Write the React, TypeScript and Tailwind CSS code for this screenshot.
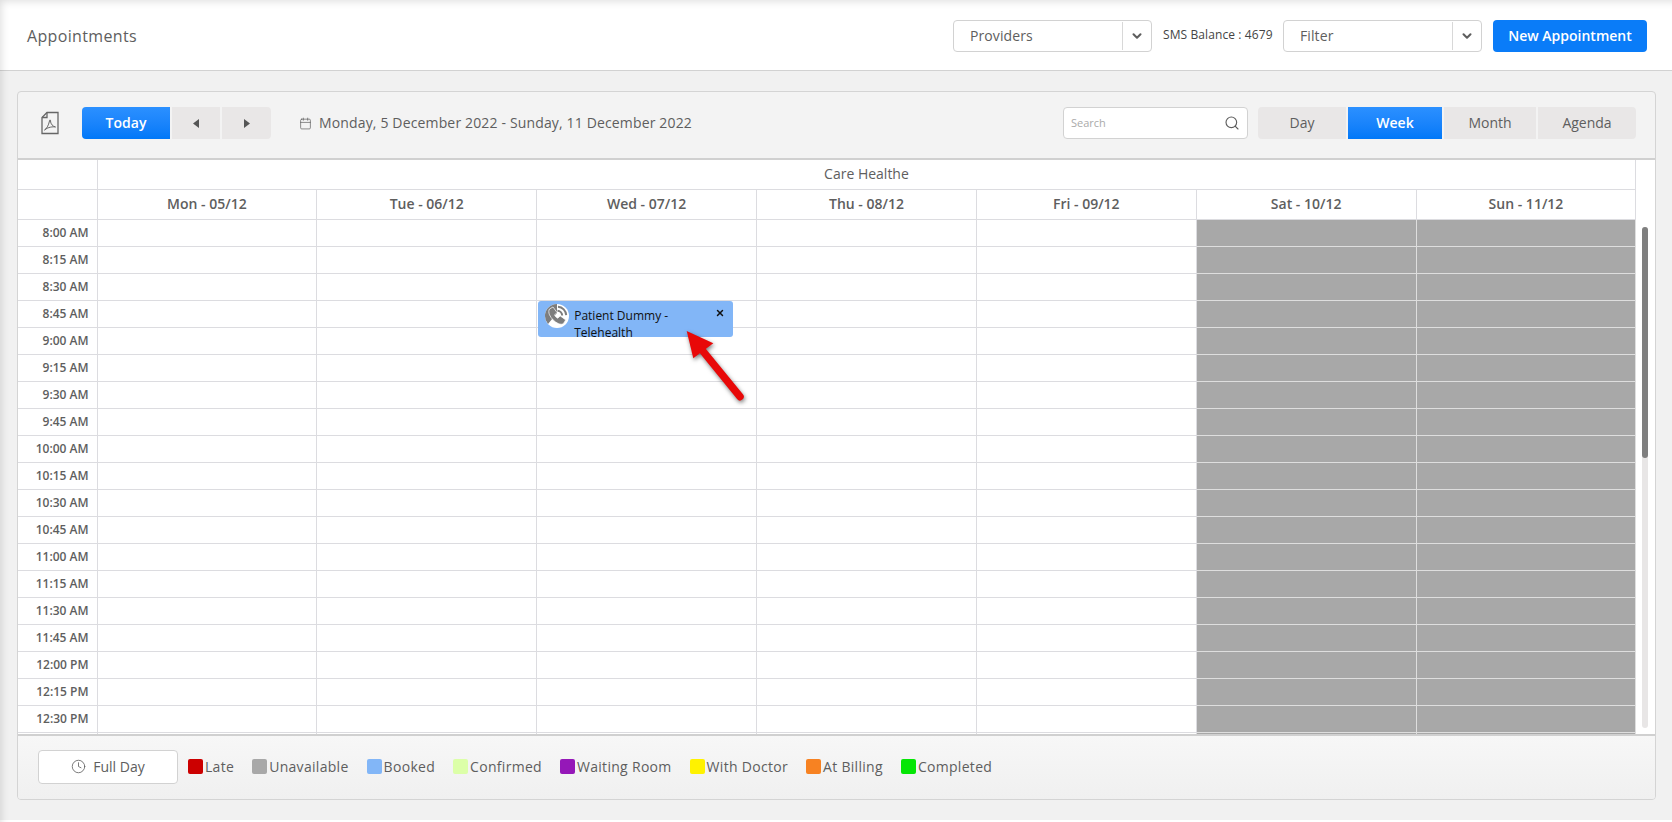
import { Calendar, ChevronDown, Clock, Search, X } from "lucide-react";

const days = ["Mon - 05/12", "Tue - 06/12", "Wed - 07/12", "Thu - 08/12", "Fri - 09/12", "Sat - 10/12", "Sun - 11/12"];

// the last row is only a sliver at the bottom of the grid, its label stays out of view
const times = [
  "8:00 AM", "8:15 AM", "8:30 AM", "8:45 AM", "9:00 AM", "9:15 AM", "9:30 AM", "9:45 AM",
  "10:00 AM", "10:15 AM", "10:30 AM", "10:45 AM", "11:00 AM", "11:15 AM", "11:30 AM", "11:45 AM",
  "12:00 PM", "12:15 PM", "12:30 PM", "",
];

const legend = [
  { label: "Late", color: "bg-[#cc0000]" },
  { label: "Unavailable", color: "bg-[#a8a8a8]" },
  { label: "Booked", color: "bg-[#82b6f7]" },
  { label: "Confirmed", color: "bg-[#dcffa8]" },
  { label: "Waiting Room", color: "bg-[#9518b8]" },
  { label: "With Doctor", color: "bg-[#fff200]" },
  { label: "At Billing", color: "bg-[#f78222]" },
  { label: "Completed", color: "bg-[#05e605]" },
];

const PdfIcon = () => (
  <svg width="18" height="24" viewBox="0 0 18 24" fill="none" stroke="#666" strokeWidth="1.3">
    <path d="M6 1.500h11v21H1V6.500z" />
    <path d="M6 1.500v5H1" />
    <path d="M3.500 19c2-1 4-4.500 5-9 .3-1.500 1-1.500 1 0 0 3 2.500 5.500 5 6-2.500-.5-7.500 0-11 3z" strokeWidth="1" />
  </svg>
);

const PhoneIcon = () => (
  <svg width="24" height="24" viewBox="0 0 24 24" className="shrink-0">
    <circle cx="12" cy="12" r="12" fill="#fff" />
    <path d="M12 0A12 12 0 0 0 0 12a12 12 0 0 0 3 8L12 9z" fill="#7d7d7d" />
    <path d="M4.500 5l3.500-2 4 5.500-2.500 2.500c.6 1.300 1.700 2.500 3.200 3.200l2.500-2.300 5.500 4-2 3.300c-1.200 1.300-3.300 1.300-5.400.4-3.600-1.600-7.200-5.200-8.800-8.800-.9-2.100-.9-4.500 0-5.800z" fill="#7d7d7d" stroke="#fff" strokeWidth="0.7" />
    <path d="M12.500 6.800a5 5 0 0 1 4.700 4.700M13 2.800a8.800 8.800 0 0 1 8.200 8.300" fill="none" stroke="#7d7d7d" strokeWidth="2" />
  </svg>
);

const Select = ({ label }: { label: string }) => (
  <div className="flex h-8 w-[199px] items-center rounded border border-[#d2d2d2] bg-white">
    <span className="flex-1 pl-[16px] text-sm font-medium tracking-[0.1px]">{label}</span>
    <span className="flex h-[28px] w-[29px] items-center justify-center border-l border-[#d8d8d8]">
      <ChevronDown size={14} strokeWidth={3.5} />
    </span>
  </div>
);

const ViewButton = ({ label, active, width }: { label: string; active?: boolean; width: string }) => (
  <button
    className={`flex h-8 items-center justify-center text-sm first:rounded-l last:rounded-r ${width} ${
      active ? "bg-gradient-to-b from-[#2b90ff] to-[#0078f8] font-semibold text-white" : "bg-[#e9e7e7] font-medium"
    }`}
  >
    {label}
  </button>
);

export default function App() {
  return (
    <div className="relative flex h-[822px] w-full flex-col overflow-hidden bg-white pb-[2px] font-['Open_Sans',sans-serif] text-[#5e5e5e]">
      <header className="flex h-[71px] shrink-0 items-center justify-between border-b border-[#d2d2d2] bg-white pl-[27px] pr-[25px] pt-[2px]">
        <h1 className="text-base font-medium tracking-[0.35px]">Appointments</h1>
        <div className="flex items-center">
          <Select label="Providers" />
          <span className="ml-[11px] mr-[9px] w-[111px] whitespace-nowrap pb-[2px] text-xs tracking-[0.1px] text-[#444]">SMS Balance : 4679</span>
          <Select label="Filter" />
          <button className="ml-[11px] h-8 w-[154px] rounded bg-[#0a7cf8] text-sm font-semibold text-white">New Appointment</button>
        </div>
      </header>

      <main className="flex-1 bg-[#f1f1f1] pl-[17px] pr-[16px] pt-[20px]">
        <div className="flex h-[709px] flex-col overflow-hidden rounded border border-[#d4d4d4] bg-[#f3f3f3]">
          <div className="flex h-[68px] shrink-0 items-center justify-between border-b-2 border-[#d0d0d0] pb-[4px] pl-[23px] pr-[19px]">
            <div className="flex items-center">
              <PdfIcon />
              <button className="ml-[23px] h-8 w-[88px] rounded-l bg-gradient-to-b from-[#2b90ff] to-[#0078f8] text-sm font-semibold text-white">Today</button>
              <button className="ml-[2px] flex h-8 w-[48px] items-center justify-center bg-[#e9e7e7]">
                <svg width="6" height="9" viewBox="0 0 6 9"><path d="M6 0v9L0 4.500z" fill="#555" /></svg>
              </button>
              <button className="ml-[2px] flex h-8 w-[49px] items-center justify-center rounded-r bg-[#e9e7e7]">
                <svg width="6" height="9" viewBox="0 0 6 9"><path d="M0 0v9l6-4.500z" fill="#555" /></svg>
              </button>
              <Calendar size={13} strokeWidth={1.3} className="ml-[28px]" />
              <span className="ml-[7px] text-sm tracking-[0.15px]">Monday, 5 December 2022 - Sunday, 11 December 2022</span>
            </div>
            <div className="flex items-center">
              <div className="mr-[10px] flex h-8 w-[185px] items-center justify-between rounded border border-[#d2d2d2] bg-white pl-[7px] pr-[7px]">
                <span className="text-[11px] text-[#aaa]">Search</span>
                <Search size={16} strokeWidth={1.7} />
              </div>
              <div className="flex gap-[2px]">
                <ViewButton label="Day" width="w-[88px]" />
                <ViewButton label="Week" active width="w-[94px]" />
                <ViewButton label="Month" width="w-[92px]" />
                <ViewButton label="Agenda" width="w-[98px]" />
              </div>
            </div>
          </div>

          <div className="relative flex-1 overflow-hidden bg-white">
            <div className="grid grid-cols-[79.5px_repeat(7,219.85px)_1fr]">
              <div className="h-[30px] border-b border-r border-[#dcdce0]" />
              <div className="col-span-7 flex h-[30px] items-center justify-center border-b border-r border-[#dcdce0] pb-[1px] text-sm font-medium">Care Healthe</div>
              <div />
              <div className="h-[30px] border-b border-r border-[#dcdce0]" />
              {days.map((d) => (
                <div key={d} className="flex h-[30px] items-center justify-center border-b border-r border-[#dcdce0] pb-[1px] text-sm font-semibold">{d}</div>
              ))}
              <div />
              {times.map((t) => (
                <div key={t} className="contents">
                  <div className="flex h-[27px] items-center justify-end border-b border-r border-[#dcdce0] pr-[8px] text-xs font-semibold">{t}</div>
                  {days.map((d, i) => (
                    <div
                      key={d}
                      className={`relative h-[27px] border-b border-r ${i > 4 ? "border-[#dedede] bg-[#a8a8a8]" : "border-[#dcdce0]"}`}
                    >
                      {t === "8:45 AM" && i === 2 && (
                        <div className="absolute left-[1px] top-0 z-10 flex h-[36px] w-[195px] gap-[5px] rounded-[3px] bg-[#82b6f7] pl-[7px] pr-[8px] pt-[3px]">
                          <PhoneIcon />
                          <span className="w-[125px] pt-[3px] text-xs leading-[17px] text-[#111]">Patient Dummy - Telehealth</span>
                          <X size={10} strokeWidth={3.5} className="ml-auto mt-[4px] text-[#111]" />
                        </div>
                      )}
                    </div>
                  ))}
                  <div />
                </div>
              ))}
            </div>
            <div className="absolute bottom-[6px] right-[7px] top-[67px] w-[6px] rounded-full bg-[#e8e6e6]">
              <div className="h-[231px] rounded-full bg-[#7f7f7f]" />
            </div>
          </div>

          <footer className="flex h-[65px] shrink-0 items-center border-t-2 border-[#d0d0d0] bg-gradient-to-b from-[#f7f7f7] to-[#f0f0f0] pb-[2px] pl-[20px]">
            <button className="flex h-[34px] w-[140px] items-center justify-center gap-[7px] rounded border border-[#d2d2d2] bg-white text-sm font-medium">
              <Clock size={15} strokeWidth={1.3} />
              Full Day
            </button>
            <div className="ml-[10px] flex gap-[18px]">
              {legend.map((l) => (
                <div key={l.label} className="flex items-center gap-[2px] text-sm font-medium tracking-[0.3px]">
                  <span className={`h-[15px] w-[15px] rounded-[2px] ${l.color}`} />
                  {l.label}
                </div>
              ))}
            </div>
          </footer>
        </div>
      </main>

      <svg width="70" height="80" viewBox="0 0 70 80" className="absolute left-[680px] top-[325px] z-20 drop-shadow-[1px_2px_2px_rgba(0,0,0,0.5)]">
        <path d="M6.700 6L33.300 18.300 13.300 33.300z" fill="#e80808" />
        <path d="M22 25L60 71.700" stroke="#e80808" strokeWidth="7.500" strokeLinecap="round" />
      </svg>
      <div className="pointer-events-none absolute inset-0 z-30 shadow-[inset_6px_6px_8px_-5px_rgba(0,0,0,0.14)]" />
    </div>
  );
}
